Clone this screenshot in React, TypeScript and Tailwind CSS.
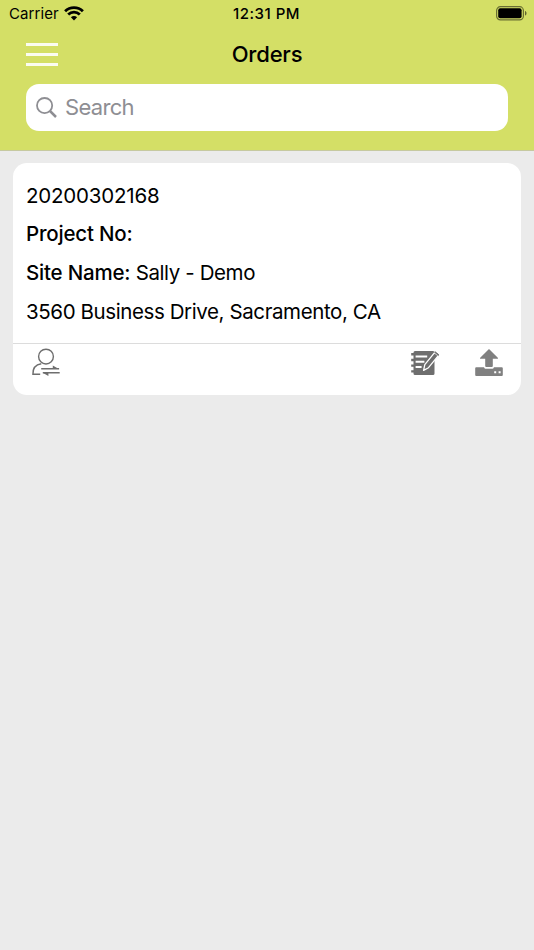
import React from 'react';

const orders = [
  {
    id: '20200302168',
    projectNo: '',
    siteName: 'Sally - Demo',
    address: '3560 Business Drive, Sacramento, CA',
  },
];

const WifiIcon = () => (
  <svg width="20" height="15" viewBox="0 0 20 15" fill="none" stroke="#000" strokeWidth="2.8">
    <path d="M1.1 5.2C6 .3 14 .3 18.9 5.2" />
    <path d="M4.2 8.6c3.3-3.2 8.3-3.2 11.6 0" />
    <path d="M10 14.4 6.9 11.3c1.7-1.7 4.5-1.7 6.2 0z" fill="#000" stroke="none" />
  </svg>
);

const BatteryIcon = () => (
  <svg width="32" height="15" viewBox="0 0 32 15">
    <rect x=".6" y=".7" width="26.8" height="13.2" rx="3.8" fill="none" stroke="#000" strokeOpacity=".5" strokeWidth="1.2" />
    <rect x="2.2" y="2.3" width="23.4" height="10" rx="2" />
    <path d="M29 5c2 .7 2 3.9 0 4.6z" fillOpacity=".55" />
  </svg>
);

const AssignIcon = () => (
  <svg width="30" height="30" viewBox="0 0 30 30" fill="none" stroke="#6e6e6e" strokeWidth="1.4">
    <circle cx="15" cy="9.6" r="7.4" />
    <path d="M9.2 27.3H1.9c-.2-5.5 2.8-9.6 8.4-10.5" />
    <path d="M10.2 21.8h17.9M11.8 25.8h16.9" />
    <path d="M21.8 18.5 27.8 22h-6zM17.4 29.1 11.7 25.7h5.7z" fill="#6e6e6e" stroke="none" />
  </svg>
);

const NotesIcon = () => (
  <svg width="28" height="26" viewBox="0 0 28 26">
    <path d="M4 1h18a1.5 1.5 0 0 1 1.5 1.5v21A1.5 1.5 0 0 1 22 25H4a1.5 1.5 0 0 1-1.5-1.5v-21A1.5 1.5 0 0 1 4 1z" fill="#6e6e6e" />
    <path d="M.2 4.3h4M.2 10h4M.2 15.6h4M.2 21.4h4" stroke="#6e6e6e" strokeWidth="2.4" />
    <path d="M4.6 6.6h11.6M4.6 11.8h8.8M4.6 17h6" stroke="#fff" strokeWidth="2" />
    <path d="m12.6 20.4 1.2-5.8 9.8-11.9 3.7 3-9.8 12z" fill="#6e6e6e" stroke="#fff" strokeWidth="1.3" strokeLinejoin="round" />
    <path d="m23.6 2.2.5-.4 3.7 2.9-.5.8z" fill="#6e6e6e" stroke="#6e6e6e" strokeLinejoin="round" />
  </svg>
);

const UploadIcon = () => (
  <svg width="28" height="28" viewBox="0 0 28 28" fill="#808080">
    <path d="m14 0 8.8 8.7c.4.5.2 1-.4 1h-4.6v7.3a1 1 0 0 1-1 1h-5.6a1 1 0 0 1-1-1V9.7H5.6c-.6 0-.8-.5-.4-1z" />
    <path d="M1.2 18.2h7.9c.2 1 1 1.6 2 1.6h5.8c1 0 1.8-.6 2-1.6h7.9a1 1 0 0 1 1 1v6.9a1 1 0 0 1-1 1H1.2a1 1 0 0 1-1-1v-6.9a1 1 0 0 1 1-1z" />
    <path d="M19.2 22.3h2v2h-2zM23.6 22.3h2v2h-2z" fill="#fff" />
  </svg>
);

const App: React.FC = () => {
  return (
    <div className="min-h-screen bg-[#ebebeb] text-black font-['Inter',sans-serif]">
      <header className="h-[151px] bg-[#d4df66] border-b border-[#c6c9a0]">
        <div className="h-7 grid grid-cols-3 items-center pl-[9px] pr-[6px]">
          <div className="flex items-center gap-[5px] pt-[1px] text-[15px] tracking-[0.1px]">
            <span>Carrier</span>
            <span className="-mt-[3px]"><WifiIcon /></span>
          </div>
          <span className="-ml-[4px] pt-[1px] text-center text-[15px] font-medium tracking-[0.5px]">12:31 PM</span>
          <div className="flex justify-end -mt-[2px]"><BatteryIcon /></div>
        </div>

        <div className="h-14 grid grid-cols-3 items-center px-[26px]">
          <button aria-label="Menu" className="w-8 -mt-[3px] flex flex-col gap-[7px]">
            <span className="h-[3px] bg-white/90"></span>
            <span className="h-[3px] bg-white/90"></span>
            <span className="h-[3px] bg-white/90"></span>
          </button>
          <h1 className="-mt-[3px] text-center text-[22px] font-medium tracking-[-0.2px]">Orders</h1>
        </div>

        <div className="mx-[26px] h-[46.5px] bg-white rounded-[13px] flex items-center gap-2 pl-[10px] text-[#8e8e93]">
          <svg width="21" height="21" viewBox="0 0 21 21" fill="none" stroke="currentColor" strokeWidth="1.8">
            <circle cx="8.6" cy="8.6" r="7.6" />
            <path d="m14 14 6 6" strokeWidth="2.5" />
          </svg>
          <span className="text-[22px] tracking-[-0.7px]">Search</span>
        </div>
      </header>

      <main className="px-[13px] pt-3">
        {orders.map(order => (
          <div key={order.id} className="h-[232px] bg-white rounded-[14px]">
            <div className="h-[180px] pt-[13.6px] pl-[13px] text-[20.5px] leading-[38.8px] tracking-[-0.4px] whitespace-nowrap">
              <p className="tracking-[-0.2px]">{order.id}</p>
              <p><span className="font-medium tracking-[-0.2px]">Project No:</span> {order.projectNo}</p>
              <p><span className="font-medium tracking-[-0.2px]">Site Name:</span> {order.siteName}</p>
              <p>{order.address}</p>
            </div>
            <div className="h-[52px] border-t border-[#dcdcdc] px-[18px] pt-[3px] flex items-start">
              <button aria-label="Assign"><AssignIcon /></button>
              <div className="ml-auto flex items-start gap-9 pt-[2px]">
                <button aria-label="Notes" className="pt-[1px]"><NotesIcon /></button>
                <button aria-label="Upload"><UploadIcon /></button>
              </div>
            </div>
          </div>
        ))}
      </main>
    </div>
  );
};

export default App;
